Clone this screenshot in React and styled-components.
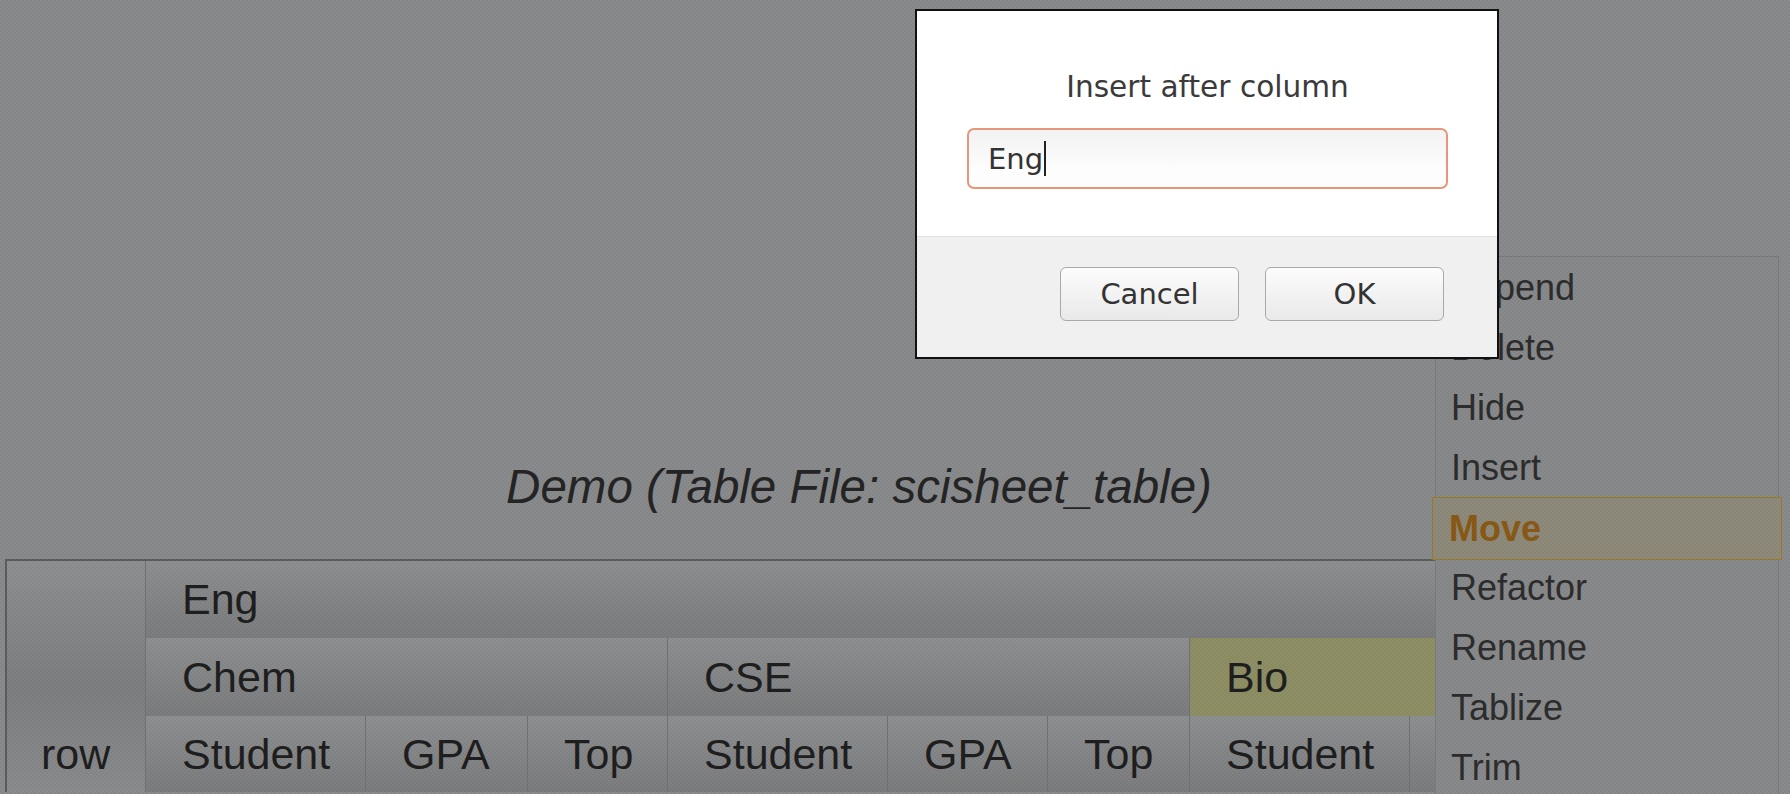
import React from 'react';
import styled, { createGlobalStyle } from 'styled-components';

const GlobalStyle = createGlobalStyle`
  * { box-sizing: border-box; }
  html, body {
    margin: 0;
    padding: 0;
    background: #8a8b8c;
    overflow: hidden;
  }
  body {
    font-family: "Liberation Sans", Arial, sans-serif;
  }
`

const Page = styled.div`
  padding: 460px 0 0 5px;
  min-height: 794px;
`

const Sheet = styled.table`
  width: 1708px;
  table-layout: fixed;
  border-collapse: separate;
  border-spacing: 0;
  border: 2px solid #5c5d5e;
  border-bottom: none;
`

const Caption = styled.caption`
  font-style: italic;
  font-size: 47.5px;
  line-height: 53px;
  color: #252526;
  padding-bottom: 46px;
  text-align: center;
  white-space: nowrap;
`

const Row = styled.tr`
  height: ${({ h }) => h}px;
`

const Head = styled.th`
  font-weight: normal;
  font-size: 43px;
  color: #1f1f20;
  text-align: left;
  padding: 0 0 0 ${({ pad }) => pad || 36}px;
  vertical-align: ${({ bottom }) => (bottom ? 'bottom' : 'middle')};
  padding-bottom: ${({ bottom }) => (bottom ? 13 : 0)}px;
  border-left: ${({ first }) => (first ? 'none' : '1px solid #727374')};
  background: ${({ hot }) =>
    hot ? '#8f8f66' : 'linear-gradient(#8f9091, #7c7d7e)'};
  white-space: nowrap;
  overflow: hidden;
`

const RowHead = styled(Head)`
  background: linear-gradient(#8f9091 0%, #7e7f80 55%, #8b8c8d 100%);
`

const Backdrop = styled.div`
  position: fixed;
  inset: 0;
  pointer-events: none;
  z-index: 5;
  background-image: repeating-conic-gradient(rgba(0, 0, 0, 0.04) 0% 25%, transparent 0% 50%);
  background-size: 4px 4px;
`

const Menu = styled.ul`
  position: absolute;
  left: 1435px;
  top: 256px;
  width: 344px;
  margin: 0;
  padding: 1px 0 30px;
  list-style: none;
  background: #898a8b;
  border: 1px solid #7b7c7d;
  z-index: 2;
`

const Item = styled.li`
  height: ${({ active }) => (active ? 63 : 60)}px;
  line-height: ${({ active }) => (active ? 61 : 60)}px;
  font-size: 36px;
  padding-left: ${({ active }) => (active ? 16 : 15)}px;
  color: ${({ active }) => (active ? '#8a5a16' : '#2d2d2e')};
  font-weight: ${({ active }) => (active ? 'bold' : 'normal')};
  margin: ${({ active }) => (active ? '-1px -4px -2px' : '0')};
  border: ${({ active }) => (active ? '1px solid #9e7c24' : 'none')};
  background: ${({ active }) => (active ? '#8e8b7b' : 'transparent')};
  white-space: nowrap;
`

const Dialog = styled.div`
  position: absolute;
  left: 915px;
  top: 9px;
  width: 584px;
  height: 350px;
  border: 2px solid #111;
  background: #f0f0f0;
  z-index: 10;
  font-family: "DejaVu Sans", sans-serif;
  display: flex;
  flex-direction: column;
`

const Body = styled.div`
  height: 225px;
  background: #fff;
  padding: 59px 49px 0 50px;
`

const Title = styled.div`
  font-size: 29.6px;
  line-height: 34px;
  color: #3a3a3a;
  text-align: center;
`

const Field = styled.div`
  margin-top: 24px;
  height: 61px;
  border: 2px solid #e4977a;
  border-radius: 7px;
  padding: 0 19px;
  display: flex;
  align-items: center;
  font-size: 29px;
  color: #333;
  background: linear-gradient(#f2f2f2, #fdfdfd 70%);
`

const Caret = styled.span`
  display: inline-block;
  width: 2px;
  height: 35px;
  margin-left: 1px;
  background: #222;
`

const Footer = styled.div`
  flex: 1;
  border-top: 1px solid #e2e2e2;
  display: flex;
  justify-content: flex-end;
  align-items: flex-start;
  gap: 26px;
  padding: 30px 53px 0 0;
`

const Button = styled.button`
  width: 179px;
  height: 54px;
  font-family: "DejaVu Sans", sans-serif;
  font-size: 29px;
  color: #333;
  border: 1.5px solid #a9a9a9;
  border-radius: 6px;
  background: linear-gradient(#fcfcfc, #e9e9e9);
  padding: 0;
`

const groups = ['Chem', 'CSE', 'Bio'];
const cols = [
  ['Student', 'GPA', 'Top'],
  ['Student', 'GPA', 'Top'],
  ['Student', 'GPA', 'Top'],
];
const widths = [138, 220, 162, 140, 220, 160, 142, 220, 162, 140];
const commands = ['Append', 'Delete', 'Hide', 'Insert', 'Move', 'Refactor', 'Rename', 'Tablize', 'Trim'];

export default function App() {
  return (
    <>
      <GlobalStyle />
      <Page>
        <Sheet>
          <Caption>Demo (Table File: scisheet_table)</Caption>
          <colgroup>
            {widths.map((w, i) => (
              <col key={i} style={{ width: w }} />
            ))}
          </colgroup>
          <tbody>
            <Row h={77}>
              <RowHead first rowSpan={3} bottom pad={34}>row</RowHead>
              <Head colSpan={9}>Eng</Head>
            </Row>
            <Row h={78}>
              {groups.map((g) => (
                <Head key={g} colSpan={3} hot={g === 'Bio'}>{g}</Head>
              ))}
            </Row>
            <Row h={76}>
              {cols.flat().map((c, i) => (
                <Head key={i}>{c}</Head>
              ))}
            </Row>
          </tbody>
        </Sheet>
      </Page>

      <Menu>
        {commands.map((c) => (
          <Item key={c} active={c === 'Move'}>{c}</Item>
        ))}
      </Menu>

      <Backdrop />

      <Dialog>
        <Body>
          <Title>Insert after column</Title>
          <Field>
            Eng<Caret />
          </Field>
        </Body>
        <Footer>
          <Button>Cancel</Button>
          <Button>OK</Button>
        </Footer>
      </Dialog>
    </>
  );
}
